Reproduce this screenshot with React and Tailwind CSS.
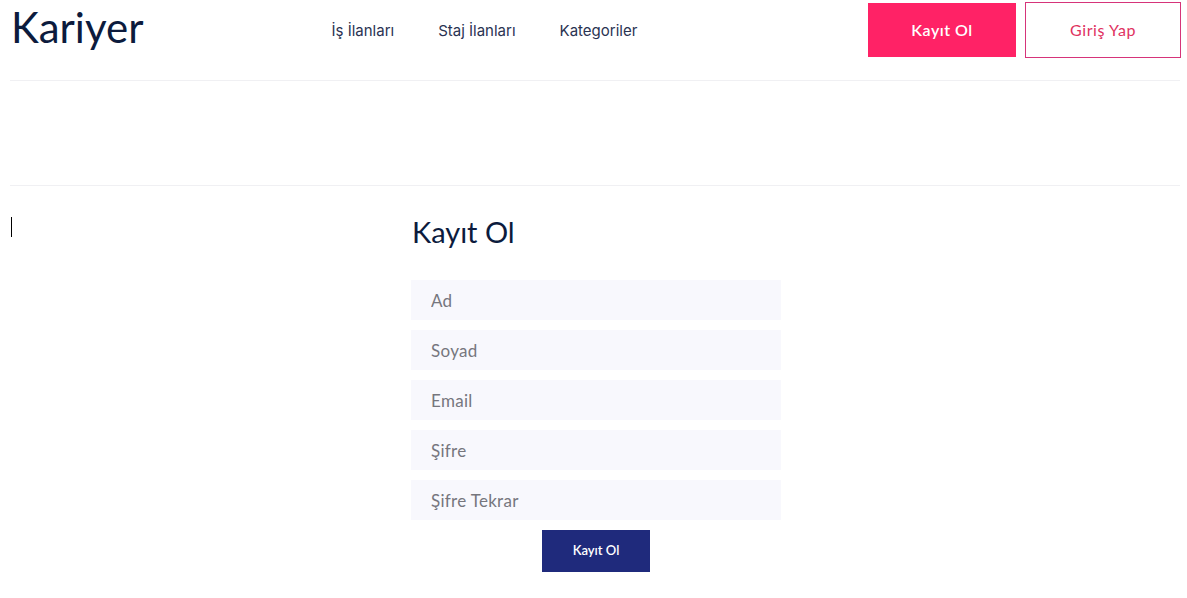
import React, { useState } from "react";

const fields = ["Ad", "Soyad", "Email", "Şifre", "Şifre Tekrar"];

const App = () => {
  const [values, setValues] = useState({});

  return (
    <div className="min-h-screen bg-white font-['Lato','Open_Sans',sans-serif]">
      <header className="ml-[10px] mr-[7px] flex h-[81px] items-start border-b border-[#f0f0f3]">
        <a className="mt-[2px] pl-[1px] text-[42px] leading-[50px] text-[#0c1b3d]">Kariyer</a>
        <nav className="ml-[188px] mt-[20px] flex gap-[44px] text-[15px] font-['Inter',sans-serif] text-[#2a3352]">
          <a>İş İlanları</a>
          <a>Staj İlanları</a>
          <a>Kategoriler</a>
        </nav>
        <div className="ml-auto mt-[2px] flex gap-[9px]">
          <button className="mt-[1px] h-[54px] w-[148px] bg-[#ff2266] text-[16px] font-semibold tracking-[0.5px] text-white">
            Kayıt Ol
          </button>
          <button className="-mr-px h-[56px] w-[156px] border border-[#d6347a] text-[16px] tracking-[0.6px] text-[#e0325f]">
            Giriş Yap
          </button>
        </div>
      </header>

      <div className="ml-[10px] mr-[7px] h-[105px] border-b border-[#f0f0f3]" />

      <main className="mx-[10px] flex pt-[31px]">
        <div className="w-[401px]">
          <div className="ml-[1px] h-[20px] w-px bg-black" />
        </div>
        <form className="flex w-[370px] flex-col" onSubmit={(e) => e.preventDefault()}>
          <h2 className="ml-[1px] text-[29px] leading-[30px] text-[#0c1b3d]">Kayıt Ol</h2>
          <div className="mt-[33px] flex flex-col gap-[10px]">
            {fields.map((f) => (
              <input
                key={f}
                type={f.startsWith("Şifre") ? "password" : "text"}
                placeholder={f}
                value={values[f] || ""}
                onChange={(e) => setValues({ ...values, [f]: e.target.value })}
                className="h-[40px] w-full bg-[#f8f8fd] px-[20px] text-[17px] tracking-[0.3px] text-[#555] placeholder-[#76767d] outline-none"
              />
            ))}
          </div>
          <button className="mx-auto mt-[10px] h-[42px] w-[108px] bg-[#1f2a7c] text-[13px] font-semibold text-white">
            Kayıt Ol
          </button>
        </form>
      </main>
    </div>
  );
};

export default App;
